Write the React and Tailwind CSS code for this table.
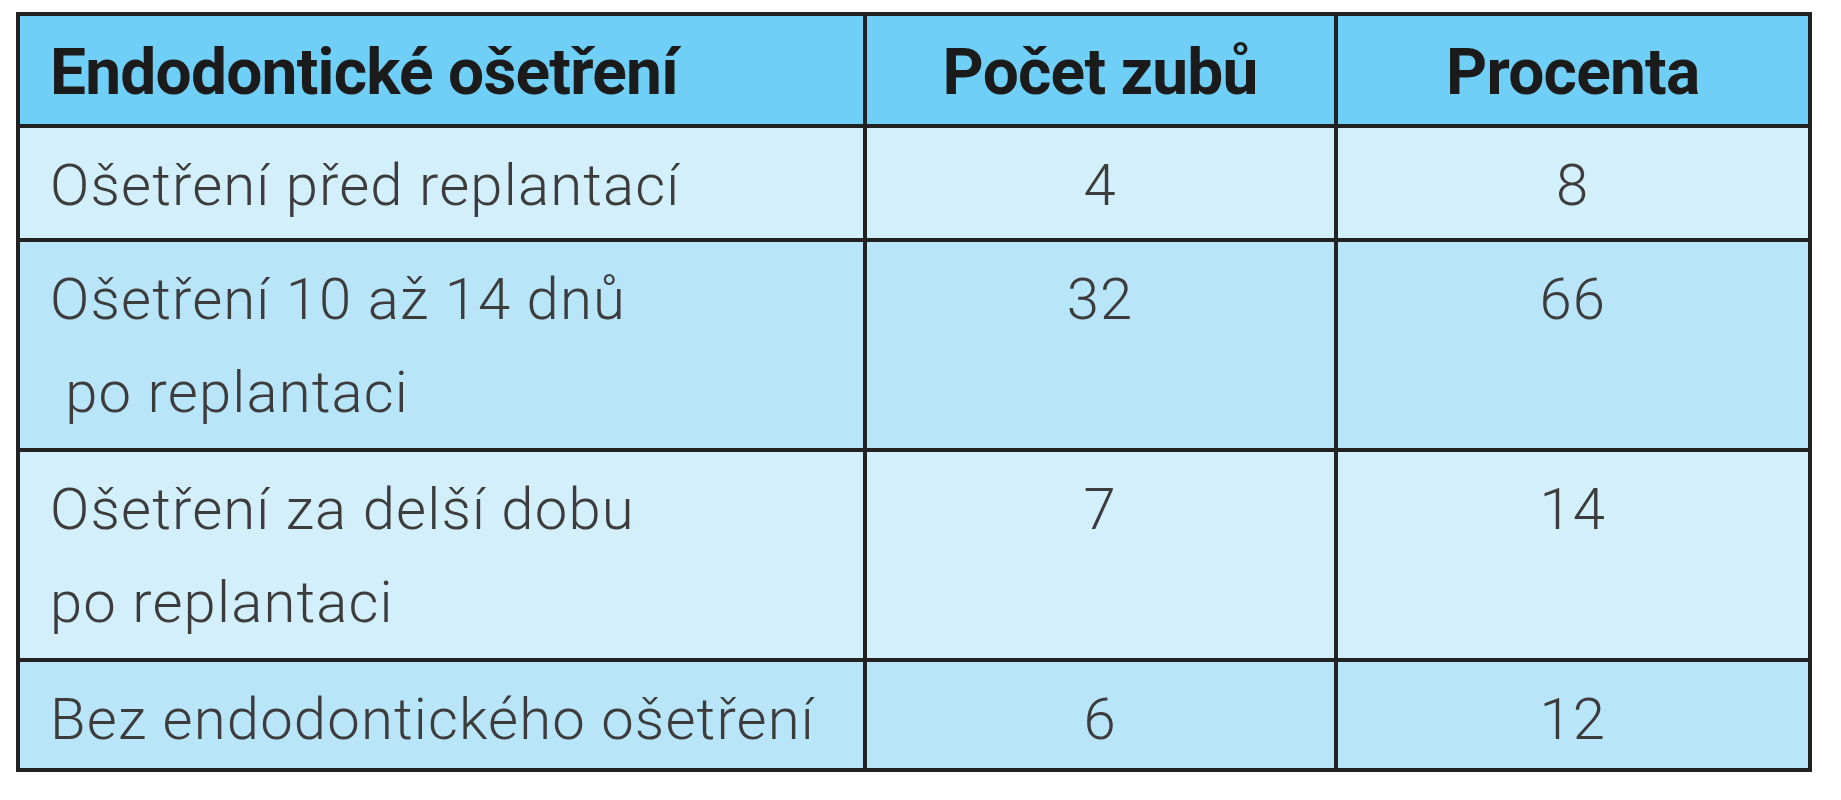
import React from 'react';

const rows = [
  { id: 1, lines: ['Ošetření před replantací'], count: '4', pct: '8', bg: 'bg-[#d3effb]', h: 'h-[114px]' },
  { id: 2, lines: ['Ošetření 10 až 14 dnů', '\u00a0po replantaci'], count: '32', pct: '66', bg: 'bg-[#b9e5f9]', h: 'h-[210px]' },
  { id: 3, lines: ['Ošetření za delší dobu', 'po replantaci'], count: '7', pct: '14', bg: 'bg-[#d3effb]', h: 'h-[210px]' },
  { id: 4, lines: ['Bez endodontického ošetření'], count: '6', pct: '12', bg: 'bg-[#b9e5f9]', h: 'h-[110px]' },
];

const App = () => {
  return (
    <div className="min-h-[800px] bg-white pt-[12px] pl-[16px] font-['Roboto',sans-serif]">
      <table className="w-[1796px] border-collapse border-4 border-[#222]">
        <colgroup>
          <col className="w-[847px]" />
          <col className="w-[473px]" />
          <col className="w-[476px]" />
        </colgroup>
        <thead>
          <tr className="h-[112px] bg-[#6fcff6]">
            <th className="border-4 border-[#222] pl-[30px] pt-[10px] align-top text-left text-[64px] leading-[93px] font-bold text-[#1b1b1b] tracking-[-0.012em]">
              Endodontické ošetření
            </th>
            <th className="border-4 border-[#222] pt-[10px] align-top text-center text-[64px] leading-[93px] font-bold text-[#1b1b1b] tracking-[-0.012em]">
              Počet zubů
            </th>
            <th className="border-4 border-[#222] pt-[10px] align-top text-center text-[64px] leading-[93px] font-bold text-[#1b1b1b] tracking-[-0.012em]">
              Procenta
            </th>
          </tr>
        </thead>
        <tbody>
          {rows.map((row) => (
            <tr key={row.id} className={`${row.h} ${row.bg}`}>
              <td className="border-4 border-[#222] pl-[30px] pt-[11px] align-top text-left text-[58px] leading-[93px] font-light tracking-[0.02em] text-[#3c3c3c]">
                {row.lines.map((line, i) => (
                  <div key={i} className="whitespace-pre">{line}</div>
                ))}
              </td>
              <td className="border-4 border-[#222] pt-[11px] align-top text-center text-[58px] leading-[93px] font-light tracking-[0.02em] text-[#3c3c3c]">
                {row.count}
              </td>
              <td className="border-4 border-[#222] pt-[11px] align-top text-center text-[58px] leading-[93px] font-light tracking-[0.02em] text-[#3c3c3c]">
                {row.pct}
              </td>
            </tr>
          ))}
        </tbody>
      </table>
    </div>
  );
};

export default App;
